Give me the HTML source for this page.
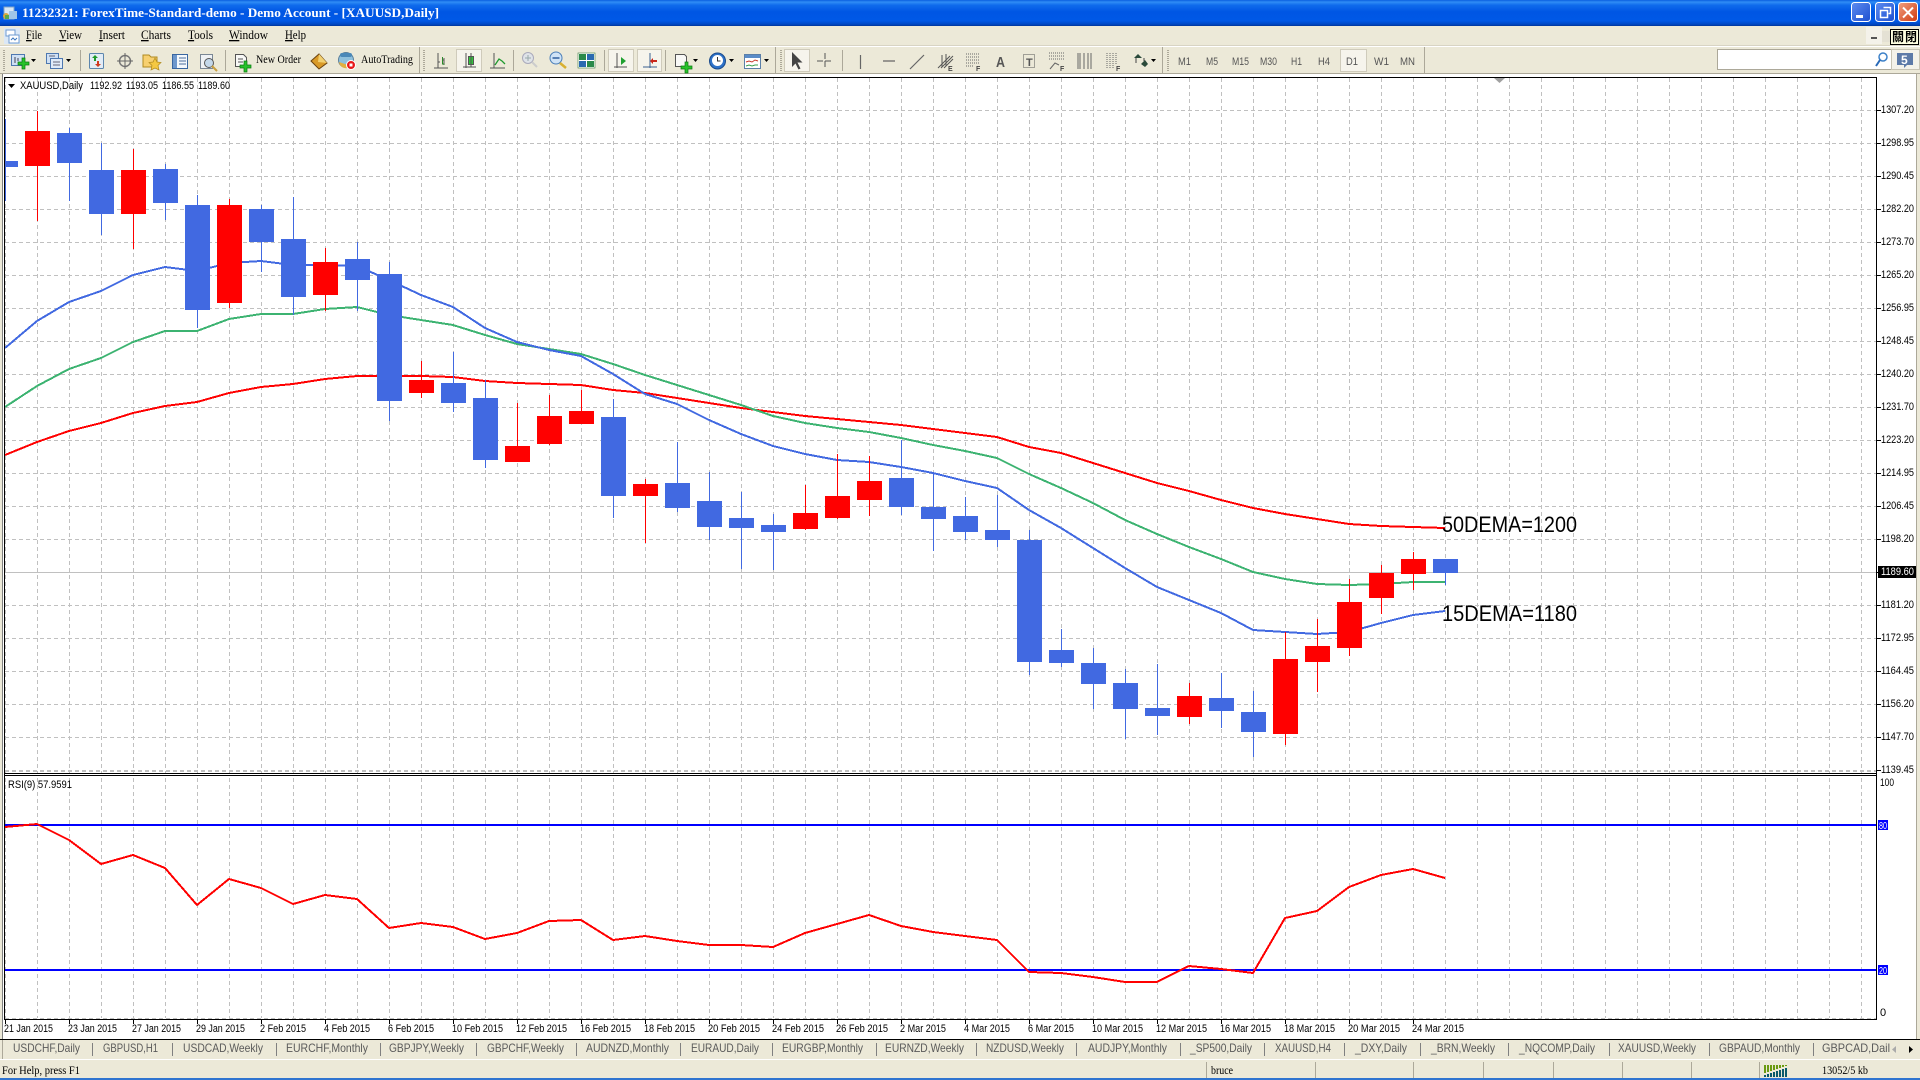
<!DOCTYPE html>
<html><head><meta charset="utf-8"><title>11232321: ForexTime-Standard-demo - Demo Account - [XAUUSD,Daily]</title>
<style>
html,body{margin:0;padding:0;background:#ece9d8;width:1920px;height:1080px;overflow:hidden}
svg{display:block;position:absolute;left:0;top:0}
text{font-family:"Liberation Sans",sans-serif;font-size:11px;fill:#000;white-space:pre}
.m{font-family:"Liberation Serif",serif;font-size:13px}
.t{fill:#5a5a5a;font-size:12px}
.f{fill:#555;font-size:11px}
</style></head><body>
<svg width="1920" height="1080" viewBox="0 0 1920 1080" xmlns="http://www.w3.org/2000/svg">
<defs>
<linearGradient id="tb" x1="0" y1="0" x2="0" y2="1"><stop offset="0" stop-color="#0a5fe0"/><stop offset=".08" stop-color="#2f8cf5"/><stop offset=".2" stop-color="#0f6bec"/><stop offset=".45" stop-color="#0056e4"/><stop offset=".8" stop-color="#0058e6"/><stop offset=".93" stop-color="#0048c4"/><stop offset="1" stop-color="#00359a"/></linearGradient>
<linearGradient id="wb" x1="0" y1="0" x2="1" y2="1"><stop offset="0" stop-color="#5e8cf0"/><stop offset="1" stop-color="#1c4fd0"/></linearGradient>
<linearGradient id="wr" x1="0" y1="0" x2="1" y2="1"><stop offset="0" stop-color="#f0a080"/><stop offset="1" stop-color="#d03a10"/></linearGradient>
<pattern id="gv" x="5" y="78" width="32" height="7" patternUnits="userSpaceOnUse"><rect width="1" height="4" fill="#c0c0c0"/></pattern>
<pattern id="gh" x="5" y="110" width="7" height="33" patternUnits="userSpaceOnUse"><rect width="4" height="1" fill="#c0c0c0"/></pattern>
<pattern id="gb" x="5" y="0" width="7" height="1080" patternUnits="userSpaceOnUse"><rect width="4" height="1080" fill="#c0c0c0"/></pattern>
<clipPath id="cp"><rect x="5" y="78" width="1871" height="695"/></clipPath>
</defs>

<!-- base -->
<rect width="1920" height="1080" fill="#ece9d8"/>
<rect x="0" y="0" width="1920" height="26" fill="url(#tb)"/>
<rect x="0" y="1078" width="1920" height="2" fill="#2f74d0"/>

<!-- title -->
<g><rect x="4" y="7" width="10" height="12" fill="#d8e6f4" stroke="#7fa4c8"/><rect x="9" y="11" width="8" height="8" fill="#9ec4e8"/><circle cx="6" cy="16" r="3" fill="#d9a640"/><rect x="5" y="15" width="4" height="4" fill="#5aa84a"/></g>
<text x="22" y="17" class="m" style="fill:#fff;font-weight:bold" textLength="417" lengthAdjust="spacingAndGlyphs">11232321: ForexTime-Standard-demo - Demo Account - [XAUUSD,Daily]</text>
<g stroke="#fff" stroke-width="1">
<rect x="1851.5" y="2.5" width="19" height="19" rx="3" fill="url(#wb)"/>
<rect x="1875.5" y="2.5" width="19" height="19" rx="3" fill="url(#wb)"/>
<rect x="1898.5" y="2.5" width="19" height="19" rx="3" fill="url(#wr)"/>
</g>
<rect x="1856" y="15" width="7" height="3" fill="#fff"/>
<path d="M1883.500 7.500h7v6h-2M1880.500 10.500h7v7h-7z" fill="none" stroke="#fff" stroke-width="1.500"/>
<path d="M1903 7.500l10 10M1913 7.500l-10 10" stroke="#fff" stroke-width="2"/>

<!-- menu -->
<rect x="4" y="28" width="16" height="16" fill="#dbe8f6"/><rect x="6" y="30" width="9" height="6" fill="#fff" stroke="#6f9bd1"/><rect x="9" y="35" width="10" height="8" fill="#fff" stroke="#6f9bd1"/><path d="M11 40l2-2 2 2 2-2" stroke="#3c78c0" fill="none"/>
<g class="m">
<text x="26" y="39" class="m" textLength="16" lengthAdjust="spacingAndGlyphs"><tspan text-decoration="underline">F</tspan>ile</text>
<text x="59" y="39" class="m" textLength="23" lengthAdjust="spacingAndGlyphs"><tspan text-decoration="underline">V</tspan>iew</text>
<text x="99" y="39" class="m" textLength="26" lengthAdjust="spacingAndGlyphs"><tspan text-decoration="underline">I</tspan>nsert</text>
<text x="141" y="39" class="m" textLength="30" lengthAdjust="spacingAndGlyphs"><tspan text-decoration="underline">C</tspan>harts</text>
<text x="188" y="39" class="m" textLength="25" lengthAdjust="spacingAndGlyphs"><tspan text-decoration="underline">T</tspan>ools</text>
<text x="229" y="39" class="m" textLength="39" lengthAdjust="spacingAndGlyphs"><tspan text-decoration="underline">W</tspan>indow</text>
<text x="285" y="39" class="m" textLength="21" lengthAdjust="spacingAndGlyphs"><tspan text-decoration="underline">H</tspan>elp</text>
</g>
<rect x="1866" y="27" width="16" height="17" fill="#f4f2ea"/><rect x="1871" y="37" width="6" height="2" fill="#555"/>
<rect x="1882" y="31" width="8" height="11" fill="#e4e1d4"/>
<rect x="1890.500" y="29.500" width="28" height="15" fill="#ffffe1" stroke="#000"/>
<text x="1892" y="41" style="font-family:'Noto Sans CJK TC','WenQuanYi Zen Hei',sans-serif;font-size:12px;font-weight:bold" textLength="25">關閉</text>

<!-- toolbar -->
<rect x="0" y="45" width="1920" height="1" fill="#d8d4c4"/>
<rect x="0" y="46" width="1920" height="1" fill="#fff"/>
<rect x="0" y="73" width="1920" height="1" fill="#aca899"/>
<g fill="#aca899">
<rect x="80" y="50" width="1" height="21"/><rect x="225" y="50" width="1" height="21"/><rect x="419" y="47" width="1" height="26"/><rect x="513" y="50" width="1" height="21"/><rect x="604" y="50" width="1" height="21"/><rect x="665" y="50" width="1" height="21"/><rect x="775" y="47" width="1" height="26"/><rect x="842" y="50" width="1" height="21"/><rect x="1162" y="47" width="1" height="26"/><rect x="1424" y="47" width="1" height="26"/>
</g>
<g stroke="#aca899" stroke-dasharray="1 1" fill="none"><path d="M3.500 50v21M4.500 50v21M423.500 50v21M424.500 50v21M780.500 50v21M781.500 50v21M1167.500 50v21M1168.500 50v21"/></g>
<!-- pressed -->
<g fill="#f6f4ec" stroke="#cfcbbb"><rect x="456.500" y="49.500" width="25" height="22"/><rect x="608.500" y="49.500" width="25" height="22"/><rect x="637.500" y="49.500" width="24" height="22"/><rect x="784.500" y="49.500" width="25" height="22"/><rect x="1340.500" y="49.500" width="26" height="22"/></g>
<!-- dropdown arrows -->
<path d="M31 59h5l-2.500 3zM66 59h5l-2.500 3zM693 59h5l-2.500 3zM729 59h5l-2.500 3zM764 59h5l-2.500 3zM1151 59h5l-2.500 3z" fill="#000"/>
<!-- new chart -->
<rect x="11.500" y="54.500" width="13" height="11" fill="#cfe0f4" stroke="#4e78b0"/><path d="M15 57v6M18 58v3" stroke="#445"/><path d="M22 58h3v4h4v3h-4v4h-3v-4h-4v-3h4z" fill="#27c22a" stroke="#0a7a10" stroke-width=".7"/>
<!-- profiles -->
<rect x="46.500" y="53.500" width="12" height="10" fill="#cfe0f4" stroke="#4e78b0"/><rect x="50.500" y="58.500" width="12" height="10" fill="#e0ebf8" stroke="#4e78b0"/><path d="M49 56h6M53 62h7M53 65h7" stroke="#667"/>
<!-- market watch -->
<rect x="89.500" y="53.500" width="14" height="15" rx="1" fill="#e2ecf6" stroke="#5d86ad"/><path d="M95 55l3 3h-2v3h-2v-3h-2z" fill="#1d9a2a"/><path d="M98 67l-3-3h2v-3h2v3h2z" fill="#cf3a20"/>
<!-- crosshair -->
<circle cx="125" cy="61" r="5.500" fill="none" stroke="#777" stroke-width="1.500"/><path d="M125 53v16M117 61h16" stroke="#666"/>
<!-- folder star -->
<path d="M143 55h6l2 2h6v10h-14z" fill="#f7d070" stroke="#b08a20"/><path d="M155 58l2 4 4 .5-3 3 1 4.500-4-2-4 2 1-4.500-3-3 4-.5z" fill="#f5c842" stroke="#b08a20" stroke-width=".7"/>
<!-- terminal -->
<rect x="172.500" y="54.500" width="15" height="14" fill="#f4f8fc" stroke="#3966a0"/><rect x="173" y="55" width="4" height="13" fill="#6d97cc"/><path d="M179 58h7M179 61h7M179 64h7" stroke="#4b6e9b"/>
<!-- tester -->
<rect x="200.500" y="54.500" width="12" height="14" fill="#eef1f4" stroke="#7a8794"/><circle cx="209" cy="63" r="4.500" fill="#c4d8ea" stroke="#555"/><path d="M212 66l5 5" stroke="#c9a040" stroke-width="2"/>
<!-- new order -->
<path d="M235.500 54.500h8l3 3v9h-11z" fill="#f8f8f6" stroke="#555"/><path d="M238 59h5M238 62h5" stroke="#555"/><path d="M244 61h3v4h4v3h-4v4h-3v-4h-4v-3h4z" fill="#27c22a" stroke="#0a7a10" stroke-width=".7"/>
<text x="256" y="63" class="m" style="font-size:12px" textLength="45" lengthAdjust="spacingAndGlyphs">New Order</text>
<!-- gold -->
<path d="M311 61l8-7 8 9-8 6z" fill="#d99a28" stroke="#6a4210"/><path d="M319 54l8 9-9-1z" fill="#f2d070"/>
<!-- autotrading -->
<circle cx="346" cy="60" r="7.500" fill="#8fc0dc" stroke="#5a7f9a"/><rect x="340" y="53" width="12" height="4" rx="2" fill="#4a88b8"/><path d="M339 62a7 7 0 0 0 12 4" fill="#e2b040"/><circle cx="351" cy="65" r="4.500" fill="#e81818" stroke="#fff"/><rect x="349.500" y="63.500" width="3" height="3" fill="#fff"/>
<text x="361" y="63" class="m" style="font-size:12px" textLength="52" lengthAdjust="spacingAndGlyphs">AutoTrading</text>
<!-- chart types -->
<path d="M434 68h14M438 53v15M438 62h2M444 58v7M442 60h2" stroke="#555" fill="none"/><path d="M442.500 57v7h2" stroke="#2a8a2a" fill="none"/>
<path d="M463 67h13M466 53v15" stroke="#555" fill="none"/><rect x="468.500" y="56.500" width="5" height="8" fill="#2fc63a" stroke="#555"/><path d="M471 53v14" stroke="#555"/>
<path d="M490 68h15M494 53v15" stroke="#555" fill="none"/><path d="M495 65l4-6 3 2 3 3" stroke="#1f9a2f" fill="none" stroke-width="1.300"/>
<!-- zooms -->
<circle cx="528" cy="58" r="5.500" fill="#dfe3e8" stroke="#aab"/><path d="M525 58h6M528 55v6" stroke="#9aa" /><path d="M532 62l5 5" stroke="#ccc" stroke-width="2"/>
<circle cx="556" cy="58" r="6" fill="#cfe3f6" stroke="#4b7fb8"/><path d="M552.500 58h7" stroke="#2f5f9f" stroke-width="1.500"/><path d="M560 63l6 5" stroke="#d8b030" stroke-width="2.500"/>
<rect x="578" y="53" width="17" height="15" fill="#fff" stroke="#3f7e3f" stroke-width=".6"/><rect x="579" y="54" width="7" height="6" fill="#2a8a4a"/><rect x="587" y="54" width="7" height="6" fill="#2a6ab0"/><rect x="579" y="61" width="7" height="6" fill="#2a6ab0"/><rect x="587" y="61" width="7" height="6" fill="#2a8a4a"/>
<!-- scroll / shift -->
<path d="M614 67h13M617 53v15" stroke="#555" fill="none"/><path d="M621 57l5 4-5 4z" fill="#1fa030"/>
<path d="M643 67h14M650 53v15" stroke="#3a5f90" fill="none"/><path d="M657 60h-4v-2l-3 3 3 3v-2h4z" fill="#c9261a"/>
<!-- indicators -->
<path d="M675.500 54.500h9l2 2v10h-11z" fill="#f8f8f6" stroke="#555"/><path d="M685 62h3v4h4v3h-4v4h-3v-4h-4v-3h4z" fill="#27c22a" stroke="#0a7a10" stroke-width=".7"/>
<!-- clock -->
<circle cx="717.500" cy="61" r="8" fill="#2e72c8" stroke="#1b4b8c"/><circle cx="717.500" cy="60.500" r="5.500" fill="#fff"/><path d="M717.500 57v4h3" stroke="#333" fill="none"/>
<!-- templates -->
<rect x="744.500" y="54.500" width="16" height="14" fill="#fff" stroke="#5a7fa8"/><rect x="745" y="55" width="15" height="3" fill="#5a8cc8"/><path d="M746 62l3-1 3 1 3-2 3 1" stroke="#c83a2a" fill="none"/><path d="M746 66l3-1 3 1 3-1 3 0" stroke="#3aa04a" fill="none"/>
<!-- cursor -->
<path d="M792 52v15l3.500-3.500 3 6 2-1-3-6h5z" fill="#444"/>
<path d="M825 53v16M817 61h15" stroke="#555" stroke-dasharray="6 2"/>
<!-- objects -->
<path d="M860.500 55v14M883 61h12M910 69l14-14" stroke="#666" fill="none" stroke-width="1.200"/>
<path d="M938 68l12-12M941 68l12-12M944 68l9-9M942 55v12M946 54v12" stroke="#555" fill="none"/><text x="948" y="71" style="font-size:7px;font-weight:bold;fill:#444">E</text>
<path d="M966 54h14M966 57h14M966 60h14M966 63h14M966 66h8" stroke="#666" stroke-dasharray="1 1"/><text x="976" y="71" style="font-size:7px;font-weight:bold;fill:#444">F</text>
<text x="996" y="67" style="font-size:15px;font-weight:bold;fill:#555" textLength="9" lengthAdjust="spacingAndGlyphs">A</text>
<rect x="1023.500" y="54.500" width="11" height="13" fill="none" stroke="#555" stroke-dasharray="1 1"/><text x="1026" y="66" style="font-size:11px;font-weight:bold;fill:#555">T</text>
<path d="M1049 53h15M1049 56h15M1049 59h15" stroke="#666" stroke-dasharray="1 1"/><path d="M1050 69l5-6 4 2" stroke="#666" fill="none"/><text x="1060" y="71" style="font-size:7px;font-weight:bold;fill:#444">F</text>
<path d="M1078 53v16M1080 53v16M1084 53v16M1088 53v16M1091 53v16" stroke="#666"/>
<path d="M1107 53v16M1110 53v16M1113 53v16M1116 53v12" stroke="#666" stroke-dasharray="1 1"/><text x="1116" y="71" style="font-size:7px;font-weight:bold;fill:#444">F</text>
<path d="M1134 58l4-4 4 4zM1141 64l4-4 3 4-3 3z" fill="#2a4a3a"/><path d="M1136 58v5M1144 58v3" stroke="#444"/>
<!-- timeframes -->
<g style="fill:#555">
<text x="1178" y="65" class="f" textLength="13" lengthAdjust="spacingAndGlyphs">M1</text>
<text x="1206" y="65" class="f" textLength="12" lengthAdjust="spacingAndGlyphs">M5</text>
<text x="1232" y="65" class="f" textLength="17" lengthAdjust="spacingAndGlyphs">M15</text>
<text x="1260" y="65" class="f" textLength="17" lengthAdjust="spacingAndGlyphs">M30</text>
<text x="1291" y="65" class="f" textLength="11" lengthAdjust="spacingAndGlyphs">H1</text>
<text x="1318" y="65" class="f" textLength="12" lengthAdjust="spacingAndGlyphs">H4</text>
<text x="1346" y="65" class="f" textLength="12" lengthAdjust="spacingAndGlyphs">D1</text>
<text x="1374" y="65" class="f" textLength="15" lengthAdjust="spacingAndGlyphs">W1</text>
<text x="1400" y="65" class="f" textLength="15" lengthAdjust="spacingAndGlyphs">MN</text>
</g>
<!-- search -->
<rect x="1717.500" y="49.500" width="174" height="20" fill="#fff" stroke="#aca899"/>
<circle cx="1883" cy="57" r="4" fill="none" stroke="#3c80c8" stroke-width="1.500"/><path d="M1880 60l-4 6" stroke="#2a6ab8" stroke-width="2"/>
<rect x="1891.500" y="49.500" width="28" height="20" fill="#f4f2ea" stroke="#c8c4b4"/>
<path d="M1897 53h16v12h-6l-3 3v-3h-7z" fill="#5d7aa8"/><text x="1901" y="64" style="font-size:12px;font-weight:bold;fill:#fff">5</text>

<!-- chart area -->
<rect x="3" y="74" width="1913" height="965" fill="#fff"/>
<rect x="2" y="74" width="1" height="986" fill="#808080"/>
<rect x="1916" y="74" width="1" height="986" fill="#aca899"/>

<!-- grids -->
<rect x="5" y="78" width="1871" height="695" fill="url(#gv)"/>
<rect x="5" y="110" width="1871" height="661" fill="url(#gh)"/>
<rect x="5" y="776" width="1871" height="242" fill="url(#gv)"/>
<rect x="5" y="771" width="1871" height="1" fill="url(#gb)"/>
<rect x="5" y="1018" width="1871" height="1" fill="url(#gb)"/>
<!-- price line -->
<rect x="5" y="572" width="1871" height="1" fill="#c0c0c0"/>

<g clip-path="url(#cp)" fill="none" stroke-width="2" shape-rendering="crispEdges">
<polyline stroke="#ff0000" points="5,455 37,442 69,431 101,423 133,413 165,406 197,402 229,393 261,387 293,384 325,379 357,376 389,376 421,376 453,377 485,381 517,383 549,384 581,385 613,390 645,393 677,398 709,403 741,408 773,412 805,416 837,419 869,422 901,425 933,429 965,433 997,437 1029,447 1061,453 1093,463 1125,473 1157,483 1189,491 1221,500 1253,508 1285,514 1317,519 1349,524 1381,526 1413,527 1445,528"/>
<polyline stroke="#3cb371" points="5,407 37,386 69,369 101,358 133,342 165,331 197,331 229,319 261,314 293,314 325,309 357,307 389,315 421,320 453,325 485,335 517,344 549,349 581,354 613,364 645,375 677,385 709,395 741,405 773,416 805,423 837,428 869,432 901,438 933,445 965,451 997,458 1029,474 1061,488 1093,503 1125,520 1157,534 1189,547 1221,559 1253,572 1285,579 1317,584 1349,585 1381,584 1413,582 1445,582"/>
<polyline stroke="#4169e1" points="5,348 37,321 69,302 101,291 133,275 165,267 197,271 229,263 261,261 293,265 325,265 357,266 389,280 421,295 453,307 485,328 517,342 549,350 581,356 613,374 645,394 677,404 709,420 741,434 773,446 805,454 837,460 869,462 901,467 933,473 965,481 997,488 1029,510 1061,528 1093,548 1125,568 1157,587 1189,600 1221,613 1253,630 1285,632 1317,634 1349,632 1381,623 1413,615 1445,611"/>
</g>

<!-- candles -->
<path fill="#4169e1" d="M5 119h1V201h-1zM5 161h13V167H5zM69 128h1V201h-1zM57 133h25V163H57zM101 143h1V235h-1zM89 170h25V214H89zM165 164h1V220h-1zM153 169h25V203h-25zM197 195h1V328h-1zM185 205h25V310h-25zM261 205h1V272h-1zM249 209h25V242h-25zM293 197h1V315h-1zM281 239h25V297h-25zM357 242h1V311h-1zM345 259h25V280h-25zM389 262h1V421h-1zM377 274h25V401h-25zM453 352h1V412h-1zM441 383h25V403h-25zM485 380h1V468h-1zM473 398h25V460h-25zM613 399h1V518h-1zM601 417h25V496h-25zM677 442h1V512h-1zM665 483h25V508h-25zM709 472h1V540h-1zM697 501h25V527h-25zM741 492h1V569h-1zM729 518h25V528h-25zM773 514h1V570h-1zM761 525h25V532h-25zM901 440h1V515h-1zM889 478h25V507h-25zM933 474h1V551h-1zM921 507h25V519h-25zM965 497h1V540h-1zM953 516h25V532h-25zM997 495h1V547h-1zM985 530h25V540h-25zM1029 530h1V675h-1zM1017 540h25V662h-25zM1061 629h1V667h-1zM1049 650h25V663h-25zM1093 648h1V709h-1zM1081 663h25V684h-25zM1125 669h1V739h-1zM1113 683h25V709h-25zM1157 664h1V735h-1zM1145 708h25V716h-25zM1221 673h1V728h-1zM1209 698h25V711h-25zM1253 691h1V757h-1zM1241 712h25V732h-25zM1445 559h1V585h-1zM1433 559h25V573h-25z"/>
<path fill="#ff0000" d="M37 111h1V221h-1zM25 131h25V166H25zM133 149h1V249h-1zM121 170h25V214h-25zM229 199h1V308h-1zM217 205h25V303h-25zM325 248h1V311h-1zM313 262h25V295h-25zM421 361h1V398h-1zM409 380h25V393h-25zM517 403h1V462h-1zM505 446h25V462h-25zM549 395h1V445h-1zM537 416h25V444h-25zM581 390h1V424h-1zM569 411h25V424h-25zM645 479h1V543h-1zM633 484h25V496h-25zM805 485h1V530h-1zM793 513h25V529h-25zM837 454h1V519h-1zM825 496h25V518h-25zM869 456h1V516h-1zM857 481h25V500h-25zM1189 683h1V724h-1zM1177 696h25V717h-25zM1285 632h1V745h-1zM1273 659h25V734h-25zM1317 619h1V692h-1zM1305 646h25V662h-25zM1349 579h1V656h-1zM1337 602h25V648h-25zM1381 565h1V614h-1zM1369 573h25V598h-25zM1413 552h1V590h-1zM1401 559h25V574h-25z"/>

<!-- chart labels -->
<text x="1442" y="532" style="font-size:22px" textLength="135" lengthAdjust="spacingAndGlyphs">50DEMA=1200</text>
<text x="1442" y="621" style="font-size:22px" textLength="135" lengthAdjust="spacingAndGlyphs">15DEMA=1180</text>
<path d="M8 84h7l-3.500 4z" fill="#000"/>
<text x="20" y="89" textLength="63" lengthAdjust="spacingAndGlyphs">XAUUSD,Daily</text>
<text x="90" y="89" textLength="32" lengthAdjust="spacingAndGlyphs">1192.92</text>
<text x="126" y="89" textLength="32" lengthAdjust="spacingAndGlyphs">1193.05</text>
<text x="162" y="89" textLength="32" lengthAdjust="spacingAndGlyphs">1186.55</text>
<text x="198" y="89" textLength="32" lengthAdjust="spacingAndGlyphs">1189.60</text>
<path d="M1494 78h11l-5.500 5z" fill="#a0a0a0"/>

<!-- RSI -->
<text x="8" y="788" textLength="64" lengthAdjust="spacingAndGlyphs">RSI(9) 57.9591</text>
<rect x="5" y="824" width="1871" height="2" fill="#0000ff"/>
<rect x="5" y="969" width="1871" height="2" fill="#0000ff"/>
<polyline fill="none" stroke="#ff0000" stroke-width="2" shape-rendering="crispEdges" points="5,827 37,824 69,840 101,864 133,855 165,868 197,905 229,879 261,888 293,904 325,895 357,899 389,928 421,923 453,927 485,939 517,933 549,921 581,920 613,940 645,936 677,941 709,945 741,945 773,947 805,933 837,924 869,915 901,926 933,932 965,936 997,940 1029,972 1061,973 1093,977 1125,982 1157,982 1189,966 1221,969 1253,973 1285,918 1317,911 1349,887 1381,875 1413,869 1445,878"/>

<!-- frames -->
<rect x="4" y="77" width="1873" height="1" fill="#000"/>
<rect x="4" y="77" width="1" height="943" fill="#000"/>
<rect x="1876" y="77" width="1" height="943" fill="#000"/>
<rect x="4" y="773" width="1873" height="1" fill="#000"/>
<rect x="4" y="775" width="1873" height="1" fill="#000"/>
<rect x="4" y="1019" width="1873" height="1" fill="#000"/>

<!-- price axis -->
<path stroke="#000" d="M1877 110.500h4M1877 143.500h4M1877 176.500h4M1877 209.500h4M1877 242.500h4M1877 275.500h4M1877 308.500h4M1877 341.500h4M1877 374.500h4M1877 407.500h4M1877 440.500h4M1877 473.500h4M1877 506.500h4M1877 539.500h4M1877 572.500h4M1877 605.500h4M1877 638.500h4M1877 671.500h4M1877 704.500h4M1877 737.500h4M1877 770.500h4"/>
<g>
<text x="1881" y="113" textLength="33" lengthAdjust="spacingAndGlyphs">1307.20</text>
<text x="1881" y="146" textLength="33" lengthAdjust="spacingAndGlyphs">1298.95</text>
<text x="1881" y="179" textLength="33" lengthAdjust="spacingAndGlyphs">1290.45</text>
<text x="1881" y="212" textLength="33" lengthAdjust="spacingAndGlyphs">1282.20</text>
<text x="1881" y="245" textLength="33" lengthAdjust="spacingAndGlyphs">1273.70</text>
<text x="1881" y="278" textLength="33" lengthAdjust="spacingAndGlyphs">1265.20</text>
<text x="1881" y="311" textLength="33" lengthAdjust="spacingAndGlyphs">1256.95</text>
<text x="1881" y="344" textLength="33" lengthAdjust="spacingAndGlyphs">1248.45</text>
<text x="1881" y="377" textLength="33" lengthAdjust="spacingAndGlyphs">1240.20</text>
<text x="1881" y="410" textLength="33" lengthAdjust="spacingAndGlyphs">1231.70</text>
<text x="1881" y="443" textLength="33" lengthAdjust="spacingAndGlyphs">1223.20</text>
<text x="1881" y="476" textLength="33" lengthAdjust="spacingAndGlyphs">1214.95</text>
<text x="1881" y="509" textLength="33" lengthAdjust="spacingAndGlyphs">1206.45</text>
<text x="1881" y="542" textLength="33" lengthAdjust="spacingAndGlyphs">1198.20</text>
<text x="1881" y="608" textLength="33" lengthAdjust="spacingAndGlyphs">1181.20</text>
<text x="1881" y="641" textLength="33" lengthAdjust="spacingAndGlyphs">1172.95</text>
<text x="1881" y="674" textLength="33" lengthAdjust="spacingAndGlyphs">1164.45</text>
<text x="1881" y="707" textLength="33" lengthAdjust="spacingAndGlyphs">1156.20</text>
<text x="1881" y="740" textLength="33" lengthAdjust="spacingAndGlyphs">1147.70</text>
<text x="1881" y="773" textLength="33" lengthAdjust="spacingAndGlyphs">1139.45</text>
</g>
<rect x="1878" y="566" width="38" height="12" fill="#000"/>
<text x="1881" y="575" style="fill:#fff" textLength="33" lengthAdjust="spacingAndGlyphs">1189.60</text>
<text x="1880" y="786" textLength="14" lengthAdjust="spacingAndGlyphs">100</text>
<rect x="1878" y="820" width="10" height="10" fill="#0000ff"/><text x="1879" y="829" style="fill:#fff;font-size:10px" textLength="8" lengthAdjust="spacingAndGlyphs">80</text>
<rect x="1878" y="965" width="10" height="10" fill="#0000ff"/><text x="1879" y="974" style="fill:#fff;font-size:10px" textLength="8" lengthAdjust="spacingAndGlyphs">20</text>
<text x="1880" y="1016">0</text>

<!-- time axis -->
<path stroke="#000" d="M5.500 1020v4M69.500 1020v4M133.500 1020v4M197.500 1020v4M261.500 1020v4M325.500 1020v4M389.500 1020v4M453.500 1020v4M517.500 1020v4M581.500 1020v4M645.500 1020v4M709.500 1020v4M773.500 1020v4M837.500 1020v4M901.500 1020v4M965.500 1020v4M1029.500 1020v4M1093.500 1020v4M1157.500 1020v4M1221.500 1020v4M1285.500 1020v4M1349.500 1020v4M1413.500 1020v4"/>
<g>
<text x="4" y="1032" textLength="49" lengthAdjust="spacingAndGlyphs">21 Jan 2015</text>
<text x="68" y="1032" textLength="49" lengthAdjust="spacingAndGlyphs">23 Jan 2015</text>
<text x="132" y="1032" textLength="49" lengthAdjust="spacingAndGlyphs">27 Jan 2015</text>
<text x="196" y="1032" textLength="49" lengthAdjust="spacingAndGlyphs">29 Jan 2015</text>
<text x="260" y="1032" textLength="46" lengthAdjust="spacingAndGlyphs">2 Feb 2015</text>
<text x="324" y="1032" textLength="46" lengthAdjust="spacingAndGlyphs">4 Feb 2015</text>
<text x="388" y="1032" textLength="46" lengthAdjust="spacingAndGlyphs">6 Feb 2015</text>
<text x="452" y="1032" textLength="51" lengthAdjust="spacingAndGlyphs">10 Feb 2015</text>
<text x="516" y="1032" textLength="51" lengthAdjust="spacingAndGlyphs">12 Feb 2015</text>
<text x="580" y="1032" textLength="51" lengthAdjust="spacingAndGlyphs">16 Feb 2015</text>
<text x="644" y="1032" textLength="51" lengthAdjust="spacingAndGlyphs">18 Feb 2015</text>
<text x="708" y="1032" textLength="52" lengthAdjust="spacingAndGlyphs">20 Feb 2015</text>
<text x="772" y="1032" textLength="52" lengthAdjust="spacingAndGlyphs">24 Feb 2015</text>
<text x="836" y="1032" textLength="52" lengthAdjust="spacingAndGlyphs">26 Feb 2015</text>
<text x="900" y="1032" textLength="46" lengthAdjust="spacingAndGlyphs">2 Mar 2015</text>
<text x="964" y="1032" textLength="46" lengthAdjust="spacingAndGlyphs">4 Mar 2015</text>
<text x="1028" y="1032" textLength="46" lengthAdjust="spacingAndGlyphs">6 Mar 2015</text>
<text x="1092" y="1032" textLength="51" lengthAdjust="spacingAndGlyphs">10 Mar 2015</text>
<text x="1156" y="1032" textLength="51" lengthAdjust="spacingAndGlyphs">12 Mar 2015</text>
<text x="1220" y="1032" textLength="51" lengthAdjust="spacingAndGlyphs">16 Mar 2015</text>
<text x="1284" y="1032" textLength="51" lengthAdjust="spacingAndGlyphs">18 Mar 2015</text>
<text x="1348" y="1032" textLength="52" lengthAdjust="spacingAndGlyphs">20 Mar 2015</text>
<text x="1412" y="1032" textLength="52" lengthAdjust="spacingAndGlyphs">24 Mar 2015</text>
</g>

<!-- tabs -->
<rect x="0" y="1039" width="1920" height="1" fill="#000"/>
<rect x="0" y="1040" width="1920" height="19" fill="#ece9d8"/>
<rect x="0" y="1059" width="1920" height="1" fill="#fff"/>
<rect x="2" y="1040" width="1" height="19" fill="#aca899"/>
<g class="t">
<text class="t" x="13" y="1052" textLength="67" lengthAdjust="spacingAndGlyphs">USDCHF,Daily</text>
<text class="t" x="103" y="1052" textLength="55" lengthAdjust="spacingAndGlyphs">GBPUSD,H1</text>
<text class="t" x="183" y="1052" textLength="80" lengthAdjust="spacingAndGlyphs">USDCAD,Weekly</text>
<text class="t" x="286" y="1052" textLength="82" lengthAdjust="spacingAndGlyphs">EURCHF,Monthly</text>
<text class="t" x="389" y="1052" textLength="75" lengthAdjust="spacingAndGlyphs">GBPJPY,Weekly</text>
<text class="t" x="487" y="1052" textLength="77" lengthAdjust="spacingAndGlyphs">GBPCHF,Weekly</text>
<text class="t" x="586" y="1052" textLength="83" lengthAdjust="spacingAndGlyphs">AUDNZD,Monthly</text>
<text class="t" x="691" y="1052" textLength="68" lengthAdjust="spacingAndGlyphs">EURAUD,Daily</text>
<text class="t" x="782" y="1052" textLength="81" lengthAdjust="spacingAndGlyphs">EURGBP,Monthly</text>
<text class="t" x="885" y="1052" textLength="79" lengthAdjust="spacingAndGlyphs">EURNZD,Weekly</text>
<text class="t" x="986" y="1052" textLength="78" lengthAdjust="spacingAndGlyphs">NZDUSD,Weekly</text>
<text class="t" x="1088" y="1052" textLength="79" lengthAdjust="spacingAndGlyphs">AUDJPY,Monthly</text>
<text class="t" x="1190" y="1052" textLength="62" lengthAdjust="spacingAndGlyphs">_SP500,Daily</text>
<text class="t" x="1275" y="1052" textLength="56" lengthAdjust="spacingAndGlyphs">XAUUSD,H4</text>
<text class="t" x="1355" y="1052" textLength="52" lengthAdjust="spacingAndGlyphs">_DXY,Daily</text>
<text class="t" x="1431" y="1052" textLength="64" lengthAdjust="spacingAndGlyphs">_BRN,Weekly</text>
<text class="t" x="1519" y="1052" textLength="76" lengthAdjust="spacingAndGlyphs">_NQCOMP,Daily</text>
<text class="t" x="1618" y="1052" textLength="78" lengthAdjust="spacingAndGlyphs">XAUUSD,Weekly</text>
<text class="t" x="1719" y="1052" textLength="81" lengthAdjust="spacingAndGlyphs">GBPAUD,Monthly</text>
<text class="t" x="1822" y="1052" textLength="68" lengthAdjust="spacingAndGlyphs">GBPCAD,Dail</text>
</g>
<g fill="#808080"><rect x="92" y="1043" width="1" height="13"/><rect x="172" y="1043" width="1" height="13"/><rect x="276" y="1043" width="1" height="13"/><rect x="380" y="1043" width="1" height="13"/><rect x="476" y="1043" width="1" height="13"/><rect x="576" y="1043" width="1" height="13"/><rect x="680" y="1043" width="1" height="13"/><rect x="772" y="1043" width="1" height="13"/><rect x="876" y="1043" width="1" height="13"/><rect x="976" y="1043" width="1" height="13"/><rect x="1076" y="1043" width="1" height="13"/><rect x="1180" y="1043" width="1" height="13"/><rect x="1264" y="1043" width="1" height="13"/><rect x="1344" y="1043" width="1" height="13"/><rect x="1420" y="1043" width="1" height="13"/><rect x="1508" y="1043" width="1" height="13"/><rect x="1609" y="1043" width="1" height="13"/><rect x="1709" y="1043" width="1" height="13"/><rect x="1813" y="1043" width="1" height="13"/></g>
<rect x="1890" y="1040" width="30" height="19" fill="#ece9d8"/>
<path d="M1896 1046v7l-4-3.500z" fill="#aaa"/><path d="M1909 1046v7l4-3.500z" fill="#000"/>

<!-- status -->
<text x="2" y="1074" class="m" style="font-size:12px" textLength="78" lengthAdjust="spacingAndGlyphs">For Help, press F1</text>
<text x="1211" y="1074" class="m" style="font-size:12px" textLength="22" lengthAdjust="spacingAndGlyphs">bruce</text>
<text x="1822" y="1074" class="m" style="font-size:12px" textLength="46" lengthAdjust="spacingAndGlyphs">13052/5 kb</text>
<g fill="#aca899"><rect x="1206" y="1062" width="1" height="16"/><rect x="1315" y="1062" width="1" height="16"/><rect x="1413" y="1062" width="1" height="16"/><rect x="1483" y="1062" width="1" height="16"/><rect x="1553" y="1062" width="1" height="16"/><rect x="1622" y="1062" width="1" height="16"/><rect x="1691" y="1062" width="1" height="16"/><rect x="1759" y="1062" width="1" height="16"/></g>
<!-- conn bars -->
<g>
<path fill="#6a9a10" d="M1764 1065h2v8h-2zM1767 1065h2v7h-2zM1770 1065h2v6h-2zM1773 1065h2v5h-2zM1776 1065h2v4h-2zM1779 1065h2v3h-2zM1782 1065h2v2h-2zM1785 1065h2v1h-2z"/>
<path fill="#0a5a6a" d="M1764 1075h2v2h-2zM1767 1074h2v3h-2zM1770 1073h2v4h-2zM1773 1072h2v5h-2zM1776 1071h2v6h-2zM1779 1070h2v7h-2zM1782 1069h2v8h-2zM1785 1068h2v9h-2z"/>
</g>
</svg>
</body></html>
